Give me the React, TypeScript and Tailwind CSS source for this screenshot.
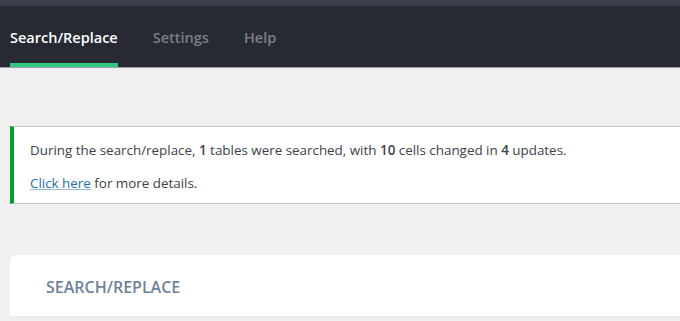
import React from 'react';

const tabs = ['Search/Replace', 'Settings', 'Help'];

const App: React.FC = () => {
  return (
    <div className="h-[321px] w-[680px] overflow-hidden bg-[#f0f0f1] font-['Open_Sans',sans-serif]">
      <div className="h-[6px] bg-[#3c3e4b]" />
      <nav className="flex h-[62px] items-end gap-[35px] border-b border-[#9a9cab] bg-[#272a33] pl-[10px]">
        {tabs.map((t, i) => (
          <div
            key={t}
            className={
              i === 0
                ? 'border-b-4 border-[#2fcc7f] pb-[14px] text-[14.5px] font-semibold text-white'
                : 'border-b-4 border-transparent pb-[14px] text-[14.5px] font-semibold text-[#7c7e86]'
            }
          >
            {t}
          </div>
        ))}
      </nav>

      <div className="pl-[10px] pt-[58px]">
        <div className="w-[720px] border border-l-4 border-[#c3c4c7] border-l-[#00a32a] bg-white pl-[16px] pt-[13px] pb-[10px] text-[13.4px] text-[#3c434a]">
          <p>
            During the search/replace, <b className="font-semibold">1</b> tables were searched, with{' '}
            <b className="font-semibold">10</b> cells changed in <b className="font-semibold">4</b> updates.
          </p>
          <p className="mt-[13px]">
            <a className="text-[#2271b1] underline decoration-[#9ab7d6]" href="#">Click here</a> for more details.
          </p>
        </div>

        <div className="mt-[51px] w-[720px] rounded-tl-[6px] bg-white">
          <div className="border-b-2 border-[#e8edf5] px-[36px] pt-[20px] pb-[17px] text-[16px] font-semibold uppercase text-[#6e819b]">
            Search/Replace
          </div>
        </div>
      </div>
    </div>
  );
};

export default App;
